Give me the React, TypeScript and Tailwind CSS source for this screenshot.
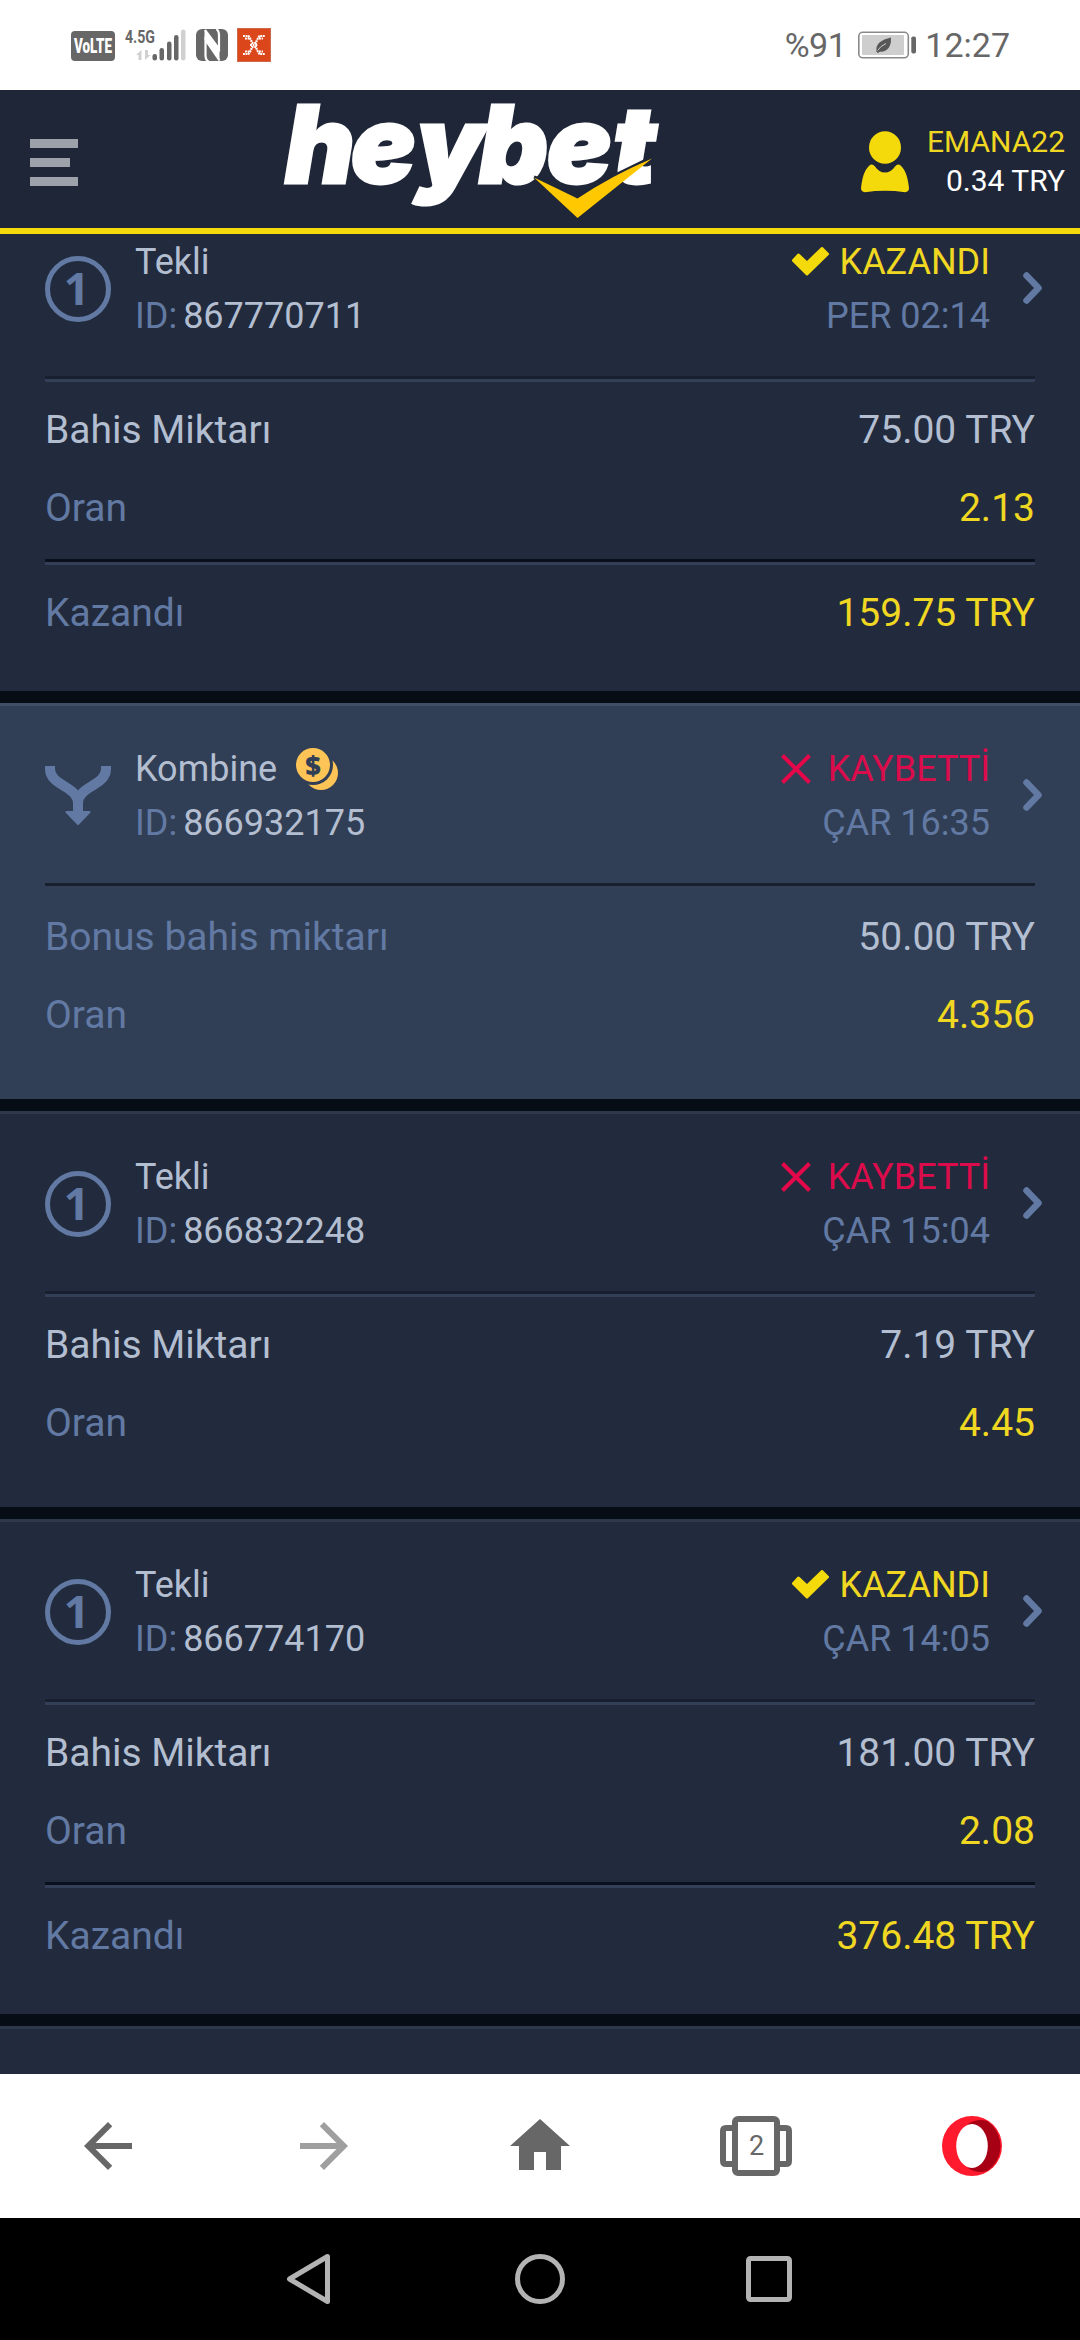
import { MdArrowBack, MdArrowForward, MdHome } from 'react-icons/md';

type Bet = {
  id: string;
  type: 'Tekli' | 'Kombine';
  won: boolean;
  bonus?: boolean;
  date: string;
  stakeLabel: string;
  stake: string;
  odds: string;
  payout?: string;
};

const bets: Bet[] = [
  { id: '867770711', type: 'Tekli', won: true, date: 'PER 02:14', stakeLabel: 'Bahis Miktarı', stake: '75.00 TRY', odds: '2.13', payout: '159.75 TRY' },
  { id: '866932175', type: 'Kombine', won: false, bonus: true, date: 'ÇAR 16:35', stakeLabel: 'Bonus bahis miktarı', stake: '50.00 TRY', odds: '4.356' },
  { id: '866832248', type: 'Tekli', won: false, date: 'ÇAR 15:04', stakeLabel: 'Bahis Miktarı', stake: '7.19 TRY', odds: '4.45' },
  { id: '866774170', type: 'Tekli', won: true, date: 'ÇAR 14:05', stakeLabel: 'Bahis Miktarı', stake: '181.00 TRY', odds: '2.08', payout: '376.48 TRY' },
];

function StatusBar() {
  return (
    <div className="flex h-[90px] shrink-0 items-center justify-between bg-white pr-[70px] pl-[71px] text-[#676767]">
      <svg width="200" height="34" viewBox="71 28 200 34" className="overflow-visible font-['Roboto',sans-serif]">
        <rect x="71" y="31" width="44" height="30" rx="4" fill="#676767" />
        <text x="74" y="53" fontSize="20" fontWeight="900" fill="#fff" textLength="38" lengthAdjust="spacingAndGlyphs">VoLTE</text>
        <text x="125" y="43" fontSize="19" fontWeight="700" fill="#676767" textLength="30" lengthAdjust="spacingAndGlyphs">4.5G</text>
        <path d="M136 55l5.500-5v10h-3v-5zM150.500 55l-5.500 5v-10h3v5z" fill="#d0d0d0" />
        <rect x="152.500" y="54" width="4.500" height="6.500" rx="2.200" fill="#676767" />
        <rect x="159.500" y="48" width="4.500" height="12.500" rx="2.200" fill="#676767" />
        <rect x="167" y="41.500" width="4.500" height="19" rx="2.200" fill="#676767" />
        <rect x="174" y="35" width="4.500" height="25.500" rx="2.200" fill="#676767" />
        <rect x="181" y="29.500" width="4.500" height="31" rx="2.200" fill="#d0d0d0" />
        {/* nfc */}
        <rect x="196" y="29" width="32" height="32" rx="6" fill="#676767" />
        <path d="M205 30l14 19V35q0-4-2.500-6" fill="none" stroke="#fff" strokeWidth="2.200" />
        <path d="M219.500 60.500L205.500 40v15q0 5 3 6.500" fill="none" stroke="#fff" strokeWidth="2.200" />
        <path d="M204.500 30l15 20v10.500l-15-21z" fill="#fff" />
        {/* carrier app */}
        <rect x="237.500" y="28.500" width="33" height="33" fill="#db471b" stroke="#cc6a4b" />
        <path
          d="M243 36h5.500l2.500 4 1 3h4l1-3 2.500-4h5.500M243 54h5.500l2.500-4 1-3h4l1 3 2.500 4h5.500M245 38.500h4M259 38.500h4M245 51.500h4M259 51.500h4M250 45h8"
          fill="none"
          stroke="#fff"
          strokeWidth="2.200"
          strokeDasharray="1.900 0.700"
        />
      </svg>
      <div className="flex items-center text-[34px] leading-none">
        <span className="-tracking-[0.5px]">%91</span>
        <svg width="59" height="28" viewBox="857 31.500 59 28" className="mr-[9px] ml-[11px]">
          <rect x="858.800" y="32.800" width="49.500" height="25.500" rx="4" fill="#fff" stroke="#8a8a8a" strokeWidth="1.600" />
          <rect x="862" y="35.500" width="42" height="20" rx="1" fill="#cecece" />
          <path d="M891 38q.5 9-4.500 12.500-3.500 2.500-6.500 1.500l-2 1.500-1.500-1q-1-6 3-9.500 4-3.500 11.500-5z" fill="#575757" />
          <path d="M877.500 51q3-4.500 8.500-7" fill="none" stroke="#cecece" strokeWidth="1" />
          <rect x="911.300" y="37" width="4.700" height="17" rx="1.800" fill="#676767" />
        </svg>
        <span>12:27</span>
      </div>
    </div>
  );
}

function Logo() {
  return (
    <svg width="376" height="115" viewBox="0 0 376 115" className="mt-[5px] overflow-visible">
      <text
        x="-1 65 130 193 261 327"
        y="79"
        fontSize="107"
        fontStyle="italic"
        fontWeight="900"
        fill="#fff"
        stroke="#fff"
        strokeWidth="3"
        className="font-['Inter',sans-serif]"
      >
        heybet
      </text>
      <path d="M248 73l44 16 74-36" fill="none" stroke="#1e2637" strokeWidth="3" />
      <path d="M248 73.500Q270 84 291.500 94.500 325 72 366 54.500L291.500 114z" fill="#ffc800" />
    </svg>
  );
}

function Header() {
  return (
    <header className="flex h-[144px] shrink-0 items-center border-b-6 border-[#f5da0b] bg-[#1e2637] pr-[15px] pl-[30px]">
      <div className="mt-[7px] flex w-[256px] flex-col gap-[10px]">
        <div className="h-[9px] w-[48px] bg-[#9da1aa]" />
        <div className="h-[9px] w-[40px] bg-[#9da1aa]" />
        <div className="h-[9px] w-[48px] bg-[#9da1aa]" />
      </div>
      <Logo />
      <div className="ml-auto flex items-center gap-[18px]">
        <svg width="48" height="62" viewBox="0 0 48 62" className="mt-[6px]" fill="#f5da0b">
          <ellipse cx="24" cy="16.500" rx="16" ry="16.300" />
          <path d="M10 33.500q2-.5 4 2 4 6 10 6t10-6q2-2.500 4-2Q46 38 48 57q0 4-4 4.200Q24 58.500 4 61.200 0 61 0 57 2 38 10 33.500z" />
        </svg>
        <div className="mt-[4px] text-right text-[30px] leading-[39px]">
          <div className="text-[#f0d722]">EMANA22</div>
          <div className="text-white">0.34 TRY</div>
        </div>
      </div>
    </header>
  );
}

function SingleIcon() {
  return (
    <svg width="66" height="66" viewBox="0 0 66 66">
      <circle cx="33" cy="33" r="30.500" fill="none" stroke="#627aa3" strokeWidth="5" />
      <text x="31.500" y="49" textAnchor="middle" fontSize="45" fontWeight="700" fill="#627aa3" className="font-['Open_Sans',sans-serif]">
        1
      </text>
    </svg>
  );
}

function ComboIcon() {
  return (
    <svg width="66" height="60" viewBox="0 0 66 60">
      <path d="M5 0v3C5 20 33 20 33 37v10M61 0v3C61 20 33 20 33 37" fill="none" stroke="#627aa3" strokeWidth="10" />
      <path d="M21.500 46h23L33 58z" fill="#627aa3" stroke="#627aa3" strokeWidth="2" strokeLinejoin="round" />
    </svg>
  );
}

function CoinsIcon() {
  return (
    <svg width="42" height="42" viewBox="0 0 42 42" className="overflow-visible">
      <circle cx="25" cy="25" r="17" fill="#ffc456" />
      <circle cx="17" cy="17" r="20" fill="#313f56" />
      <circle cx="17" cy="17" r="17" fill="#ffc456" />
      <text x="17" y="26.500" textAnchor="middle" fontSize="27" fontWeight="900" fill="#313f56" className="font-['Open_Sans',sans-serif]">
        $
      </text>
    </svg>
  );
}

function Row({ label, value, bright, yellow }: { label: string; value: string; bright?: boolean; yellow?: boolean }) {
  return (
    <div className="flex h-[78px] items-center justify-between pt-[2px] text-[39px] leading-none">
      <span className={bright ? 'text-[#b3bed1]' : 'text-[#627aa3]'}>{label}</span>
      <span className={yellow ? 'text-[#f0d722]' : 'text-[#b3bed1]'}>{value}</span>
    </div>
  );
}

function BetCard({ bet }: { bet: Bet }) {
  return (
    <div className={bet.bonus ? 'border-t-3 border-[#414d63] bg-[#313f56] px-[45px]' : 'border-t-3 border-[#2d384a] bg-[#222b3d] px-[45px]'}>
      <div className="flex h-[177px] items-center pt-[2px] text-[36px] leading-[54px]">
        {bet.type === 'Tekli' ? <SingleIcon /> : <ComboIcon />}
        <div className="ml-[24px] text-[#b3bed1]">
          <div className="flex items-center gap-[19px]">
            {bet.type}
            {bet.bonus && <CoinsIcon />}
          </div>
          <div>
            <span className="mr-[6px] text-[#627aa3]">ID:</span>
            {bet.id}
          </div>
        </div>
        <div className="mr-[33px] ml-auto text-right">
          {bet.won ? (
            <div className="flex items-center justify-end gap-[11px] text-[#f0d722]">
              <svg width="37" height="29" viewBox="0 0 37 29" fill="#f5da0b" stroke="#f5da0b" strokeWidth="3" strokeLinejoin="round">
                <path d="M1.500 13.500l5-5.500 8.500 8L30 1.500l5.500 5.500L15 27z" />
              </svg>
              KAZANDI
            </div>
          ) : (
            <div className="flex items-center justify-end gap-[17px] text-[#dc0c4c]">
              <svg width="30" height="30" viewBox="0 0 30 30" fill="none" stroke="#e4084b" strokeWidth="4">
                <path d="M1.500 1.500l27 27M28.500 1.500l-27 27" />
              </svg>
              KAYBETTİ
            </div>
          )}
          <div className="text-[#627aa3]">{bet.date}</div>
        </div>
        <svg width="19" height="32" viewBox="0 0 19 32" fill="none" stroke="#627aa3" strokeWidth="6.500" strokeLinecap="round" strokeLinejoin="round" className="-mr-[7px] mb-[2px]">
          <path d="M3.500 3.500L15.500 16 3.500 28.500" />
        </svg>
      </div>
      <div className="h-[3px] bg-[#182030]" />
      <div className="h-[3px] bg-[#323f57]" />
      <div className="pt-2 pb-[13px]">
        <Row label={bet.stakeLabel} value={bet.stake} bright={!bet.bonus} />
        <Row label="Oran" value={bet.odds} yellow />
      </div>
      {bet.payout ? (
        <>
          <div className="h-[3px] bg-[#0a0f1e]" />
          <div className="h-[3px] bg-[#323f57]" />
          <div className="pt-2 pb-[40px]">
            <Row label="Kazandı" value={bet.payout} yellow />
          </div>
        </>
      ) : (
        <div className="h-[33px]" />
      )}
    </div>
  );
}

function BrowserBar() {
  return (
    <div className="grid h-[144px] shrink-0 grid-cols-5 place-items-center bg-white text-[#676767]">
      <MdArrowBack size={72} />
      <MdArrowForward size={72} className="text-[#9f9f9f]" />
      <MdHome size={72} />
      <svg width="72" height="60" viewBox="0 0 72 60" fill="none" stroke="#676767" strokeWidth="6">
        <rect x="15" y="3" width="42" height="54" rx="3" />
        <path d="M15 12H6q-3 0-3 3v30q0 3 3 3h9M57 12h9q3 0 3 3v30q0 3-3 3h-9" />
        <text x="36.500" y="39" textAnchor="middle" fontSize="27" fill="#676767" stroke="none">
          2
        </text>
      </svg>
      <svg width="60" height="60" viewBox="0 0 60 60">
        <circle cx="30" cy="30" r="30" fill="#ff1b2d" />
        <path d="M26 8Q35 2 45 5A30 30 0 0 1 45 55Q35 58 26 52z" fill="#a70014" />
        <ellipse cx="30" cy="30" rx="15.800" ry="22" fill="#fff" />
      </svg>
    </div>
  );
}

function SystemNav() {
  return (
    <div className="flex h-[122px] shrink-0 items-center justify-between bg-black pr-[288px] pl-[286px]">
      <svg width="46" height="52" viewBox="0 0 46 52" fill="none" stroke="#b3b3b3" strokeWidth="5" strokeLinejoin="round">
        <path d="M3.500 26L41.500 3.500v45z" />
      </svg>
      <svg width="52" height="52" viewBox="0 0 52 52" fill="none" stroke="#b3b3b3" strokeWidth="5" className="ml-[2px]">
        <circle cx="26" cy="26" r="22.500" />
      </svg>
      <svg width="46" height="46" viewBox="0 0 46 46" fill="none" stroke="#b3b3b3" strokeWidth="5">
        <rect x="2.500" y="2.500" width="41" height="41" rx="2" />
      </svg>
    </div>
  );
}

export default function App() {
  return (
    <div className="flex h-[2340px] w-[1080px] flex-col overflow-hidden bg-[#060d14] font-['Roboto',sans-serif]">
      <StatusBar />
      <Header />
      <main className="min-h-0 flex-1 overflow-hidden">
        <div className="-mt-[38px] flex flex-col gap-[12px]">
          {bets.map((bet) => (
            <BetCard key={bet.id} bet={bet} />
          ))}
          <div className="h-[60px] border-t-3 border-[#2d384a] bg-[#222b3d]" />
        </div>
      </main>
      <BrowserBar />
      <SystemNav />
    </div>
  );
}
